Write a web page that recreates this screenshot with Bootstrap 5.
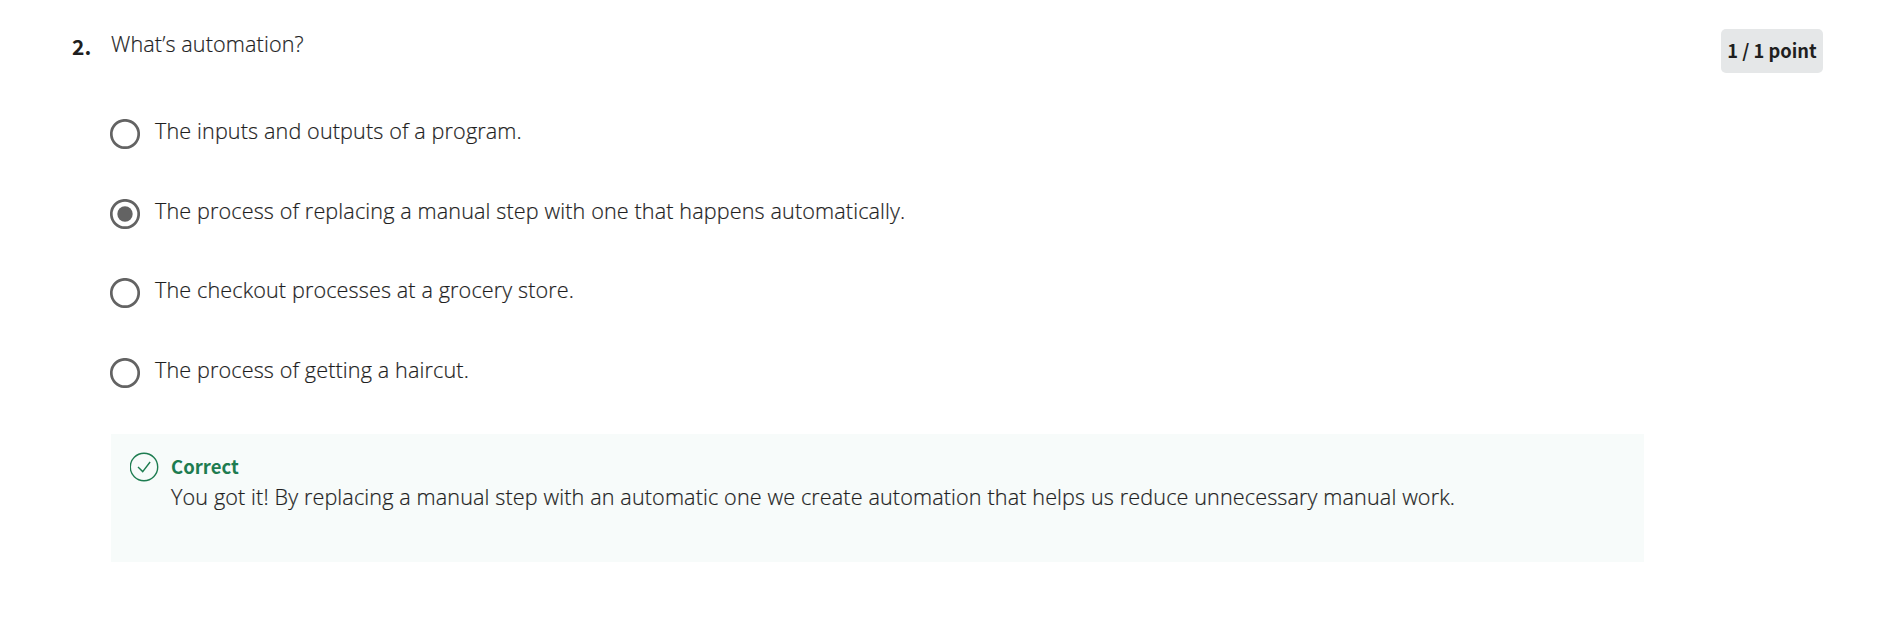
<!DOCTYPE html>
<html lang="en"><head><meta charset="utf-8"><title>Quiz question</title>
<link rel="stylesheet" href="https://cdn.jsdelivr.net/npm/bootstrap@5.3.0/dist/css/bootstrap.min.css">
<style>
body{font-family:"Open Sans",sans-serif;font-size:21.6px;font-weight:300;letter-spacing:.12px;color:#1f1f1f;line-height:30px;overflow:hidden}
.question{padding:29px 58px 0 72px}
.question p,.choice span,.feedback span{-webkit-text-stroke:.2px #1f1f1f}
.num{width:39px;font:700 21px/30px "Noto Sans CJK SC",sans-serif;padding-top:2px}
.q-body{width:1533px}
.prompt{margin-bottom:57px}
.choice{height:79.7px}
.ring{width:30px;height:30px;margin:3px 15.5px 0 -1.5px}
.points{font:700 18.3px/43px "Noto Sans CJK SC",sans-serif;letter-spacing:0;background:#e5e7e8;width:102px;height:44px;border-radius:5px}
.feedback{background:#f7fbfa;height:128px;padding:18px 19px;margin-top:-1px;gap:12px}
.verdict{font:700 18.5px/29px "Noto Sans CJK SC",sans-serif;letter-spacing:0;color:#1d7c50;margin-bottom:1px}
</style></head><body>
<main class="question d-flex align-items-start">
<div class="num flex-shrink-0">2.</div>
<section class="q-body flex-shrink-0">
<p class="prompt"><span>What’s automation?</span></p>
<div class="choice d-flex"><svg class="ring flex-shrink-0" viewBox="0 0 30 30" fill="none"><circle cx="15" cy="15" r="13.7" stroke="#636363" stroke-width="2.7"/></svg><span>The inputs and outputs of a program.</span></div>
<div class="choice d-flex"><svg class="ring flex-shrink-0" viewBox="0 0 30 30" fill="none"><circle cx="15" cy="15" r="13.7" stroke="#636363" stroke-width="2.7"/><circle cx="15" cy="15" r="7.7" fill="#636363"/></svg><span>The process of replacing a manual step with one that happens automatically.</span></div>
<div class="choice d-flex"><svg class="ring flex-shrink-0" viewBox="0 0 30 30" fill="none"><circle cx="15" cy="15" r="13.7" stroke="#636363" stroke-width="2.7"/></svg><span>The checkout processes at a grocery store.</span></div>
<div class="choice d-flex"><svg class="ring flex-shrink-0" viewBox="0 0 30 30" fill="none"><circle cx="15" cy="15" r="13.7" stroke="#636363" stroke-width="2.7"/></svg><span>The process of getting a haircut.</span></div>
<div class="feedback d-flex"><svg class="flex-shrink-0" width="29" height="30" viewBox="0 0 29 30" fill="none" stroke="#1d7c50" stroke-width="1.4"><circle cx="14" cy="15" r="13.7"/><path d="m8 15 4.7 4.6 7.4-9.6"/></svg><div><div class="verdict">Correct</div><div><span>You got it! By replacing a manual step with an automatic one we create automation that helps us reduce unnecessary manual work.</span></div></div></div>
</section>
<div class="points text-center ms-auto"><span>1 / 1 point</span></div>
</main>
<script src="https://cdn.jsdelivr.net/npm/bootstrap@5.3.0/dist/js/bootstrap.bundle.min.js"></script>
</body></html>
